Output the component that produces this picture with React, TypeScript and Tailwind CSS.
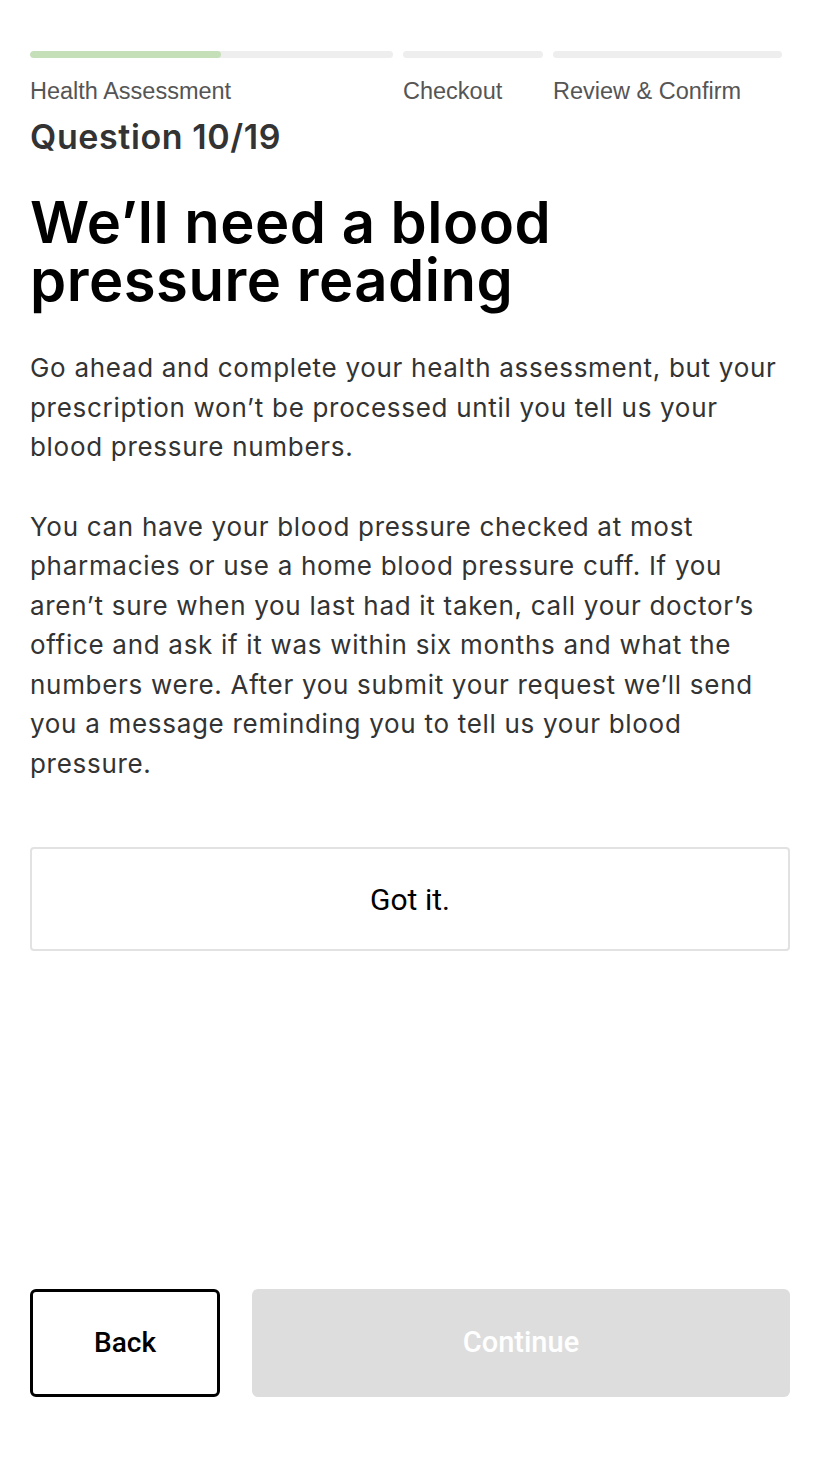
import React from 'react';

const steps = [
  { label: 'Health Assessment', width: 'w-[363px]', fill: 191 },
  { label: 'Checkout', width: 'w-[140px]', fill: 0 },
  { label: 'Review & Confirm', width: 'w-[229px]', fill: 0 },
];

export default function App() {
  return (
    <div className="min-h-[1458px] bg-white flex flex-col px-[30px] pt-[51px] pb-[61px]">
      <div className="flex gap-[10px]">
        {steps.map((s) => (
          <div key={s.label} className={`${s.width} flex flex-col`}>
            <div className="h-[7px] rounded-full bg-[#eeeeee] overflow-hidden">
              <div className="h-full rounded-full bg-[#c5dfb9]" style={{ width: s.fill }} />
            </div>
            <span className="mt-[20px] text-[23.5px] leading-[26px] text-[#555555] font-['Liberation_Sans',sans-serif] whitespace-nowrap">
              {s.label}
            </span>
          </div>
        ))}
      </div>

      <h2 className="mt-[13px] text-[34px] leading-[40px] font-semibold tracking-[0.6px] text-[#333333] font-['Inter',sans-serif]">
        Question 10/19
      </h2>

      <h1 className="mt-[36px] text-[58px] leading-[58px] font-semibold text-black tracking-[0.5px] font-['Inter',sans-serif]">
        We’ll need a blood
        <br />
        pressure reading
      </h1>

      <div className="mt-[39px] text-[26px] leading-[39.5px] tracking-[0.7px] text-[#333333] font-['Inter',sans-serif] space-y-[40px]">
        <p>
          Go ahead and complete your health assessment, but your prescription won’t be processed until you tell us
          your blood pressure numbers.
        </p>
        <p>
          You can have your blood pressure checked at most pharmacies or use a home blood pressure cuff. If you
          aren’t sure when you last had it taken, call your doctor’s office and ask if it was within six months and
          what the numbers were. After you submit your request we’ll send you a message reminding you to tell us your
          blood pressure.
        </p>
      </div>

      <button className="mt-[64px] h-[104px] w-full rounded-[4px] border-2 border-[#e2e2e2] bg-white text-[30px] text-black font-['Roboto',sans-serif]">
        Got it.
      </button>

      <div className="mt-auto flex gap-[32px]">
        <button className="w-[190px] h-[108px] rounded-[6px] border-[3px] border-black bg-white text-[28px] font-medium text-black font-['Roboto',sans-serif]">
          Back
        </button>
        <button className="flex-1 h-[108px] rounded-[6px] bg-[#dddddd] text-[29px] font-medium text-white font-['Roboto',sans-serif]">
          Continue
        </button>
      </div>
    </div>
  );
}
